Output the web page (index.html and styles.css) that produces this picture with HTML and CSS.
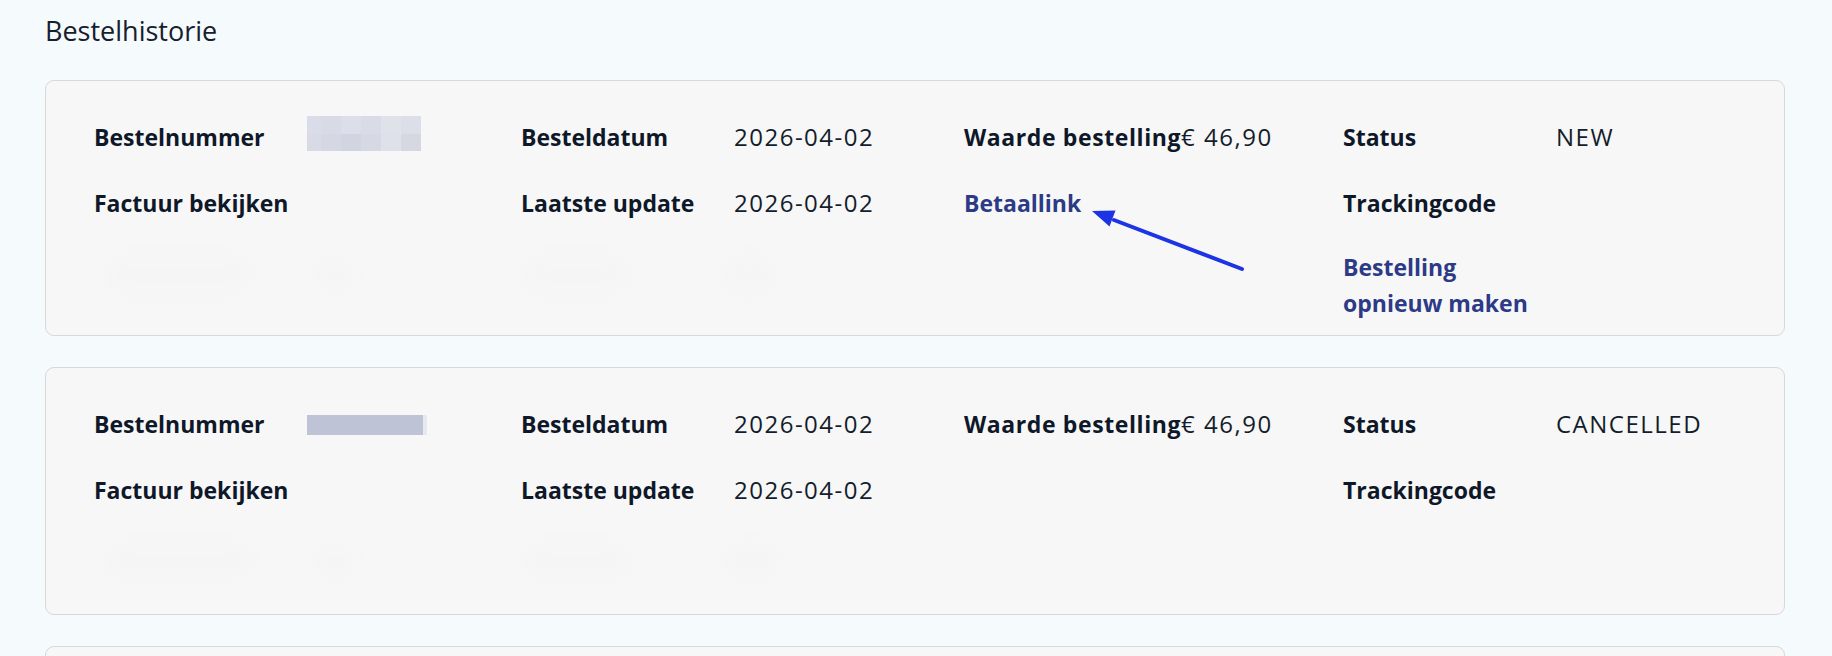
FILE: index.html
```html
<!DOCTYPE html>
<html lang="nl">
<head>
<meta charset="utf-8">
<title>Bestelhistorie</title>
<link rel="stylesheet" href="styles.css">
</head>
<body>
<main class="page">
  <h1 class="title">Bestelhistorie</h1>

  <section class="card">
    <div class="grid">
      <div class="pair"><span class="label">Bestelnummer</span><span class="value"><span class="mosaic"><i></i><i></i><i></i><i></i><i></i><i></i><i></i><i></i><i></i><i></i><i></i><i></i></span></span></div>
      <div class="pair"><span class="label">Besteldatum</span><span class="value">2026-04-02</span></div>
      <div class="pair"><span class="label label-wide">Waarde bestelling</span><span class="value">€ 46,90</span></div>
      <div class="pair"><span class="label">Status</span><span class="value">NEW</span></div>

      <div class="pair"><span class="label">Factuur bekijken</span></div>
      <div class="pair"><span class="label">Laatste update</span><span class="value">2026-04-02</span></div>
      <div class="pair"><a class="label link" href="#">Betaallink</a></div>
      <div class="pair"><span class="label">Trackingcode</span></div>

      <div class="pair ghost-row"><span class="ghost g1"></span><span class="ghost g2"></span></div>
      <div class="pair ghost-row"><span class="ghost g3"></span><span class="ghost g4"></span></div>
      <div class="pair"></div>
      <div class="pair"><a class="label link wrap" href="#">Bestelling opnieuw maken</a></div>
    </div>
    <svg class="arrow" width="170" height="80" viewBox="0 0 170 80" aria-hidden="true">
      <line x1="22" y1="11" x2="150" y2="60" stroke="#1c34e3" stroke-width="4" stroke-linecap="round"/>
      <polygon points="0,2 17.5,17.5 23.5,1.5" fill="#1c34e3"/>
    </svg>
  </section>

  <section class="card">
    <div class="grid">
      <div class="pair"><span class="label">Bestelnummer</span><span class="value"><span class="redact"></span></span></div>
      <div class="pair"><span class="label">Besteldatum</span><span class="value">2026-04-02</span></div>
      <div class="pair"><span class="label label-wide">Waarde bestelling</span><span class="value">€ 46,90</span></div>
      <div class="pair"><span class="label">Status</span><span class="value">CANCELLED</span></div>

      <div class="pair"><span class="label">Factuur bekijken</span></div>
      <div class="pair"><span class="label">Laatste update</span><span class="value">2026-04-02</span></div>
      <div class="pair"></div>
      <div class="pair"><span class="label">Trackingcode</span></div>

      <div class="pair ghost-row"><span class="ghost g1"></span><span class="ghost g2"></span></div>
      <div class="pair ghost-row"><span class="ghost g3"></span><span class="ghost g4"></span></div>
      <div class="pair"></div>
      <div class="pair"></div>
    </div>
  </section>

  <section class="card card-peek"></section>
</main>
</body>
</html>
```
FILE: styles.css
```css
* { box-sizing: border-box; }

html, body {
  margin: 0;
  padding: 0;
  background: #f5fafd;
  height: 100%;
  overflow: hidden;
}

body {
  font-family: "Open Sans", "Noto Sans", sans-serif;
  color: #101a2b;
}

.page {
  padding: 0 47px 0 45px;
}

.title {
  margin: 0;
  padding-top: 13px;
  height: 80px;
  font-size: 27px;
  font-weight: 400;
  line-height: 36px;
  color: #16202c;
}

.card {
  position: relative;
  background: #f7f7f7;
  border: 1px solid #d6d8da;
  border-radius: 9px;
  padding: 38px 48px 12px;
  margin-bottom: 31px;
}

.card-peek {
  height: 40px;
}

.grid {
  display: grid;
  grid-template-columns: 427px 443px 379px 1fr;
  grid-auto-rows: minmax(36px, auto);
  row-gap: 30px;
  font-size: 24px;
  line-height: 36px;
}

.pair {
  display: flex;
  align-items: flex-start;
  min-height: 36px;
}

.ghost-row {
  height: 64px;
}

.label {
  display: block;
  min-width: 213px;
  height: 36px;
  font-size: 23px;
  font-weight: 700;
  white-space: nowrap;
  color: #0e1829;
}

.label-wide {
  letter-spacing: 0.6px;
}

.value {
  display: block;
  height: 36px;
  font-weight: 400;
  letter-spacing: 1.5px;
  white-space: nowrap;
  color: #141d2b;
}

.link {
  color: #2d3a86;
  text-decoration: none;
}

.wrap {
  height: auto;
  white-space: normal;
  max-width: 213px;
  margin: -2px 0 2px;
}

.mosaic {
  display: grid;
  grid-template-columns: 14px 20px 20px 20px 20px 20px;
  grid-template-rows: 18px 17px;
  margin-top: -3px;
}
.mosaic i:nth-child(1) { background: #dadcea; }
.mosaic i:nth-child(2) { background: #d8dae6; }
.mosaic i:nth-child(3) { background: #dcdfe9; }
.mosaic i:nth-child(4) { background: #d9dbe6; }
.mosaic i:nth-child(5) { background: #e0e2ea; }
.mosaic i:nth-child(6) { background: #dcdee8; }
.mosaic i:nth-child(7) { background: #d8dae6; }
.mosaic i:nth-child(8) { background: #d5d7e3; }
.mosaic i:nth-child(9) { background: #d1d4e1; }
.mosaic i:nth-child(10) { background: #d6d8e4; }
.mosaic i:nth-child(11) { background: #dfe1ea; }
.mosaic i:nth-child(12) { background: #d5d7e2; }

.redact {
  display: block;
  width: 116px;
  height: 20px;
  margin-top: 9px;
  background: #bfc3d6;
  box-shadow: 4px 0 0 #e8e9f0;
}

.ghost {
  display: block;
  height: 36px;
  margin-top: 6px;
  border-radius: 18px;
  background: #f5f5f5;
  filter: blur(6px);
}
.g1 { width: 150px; margin-left: 10px; }
.g2 { width: 40px; margin-left: 60px; }
.g3 { width: 110px; margin-left: 0; }
.g4 { width: 60px; margin-left: 90px; }

.arrow {
  position: absolute;
  left: 1046px;
  top: 128px;
  overflow: visible;
}
```
